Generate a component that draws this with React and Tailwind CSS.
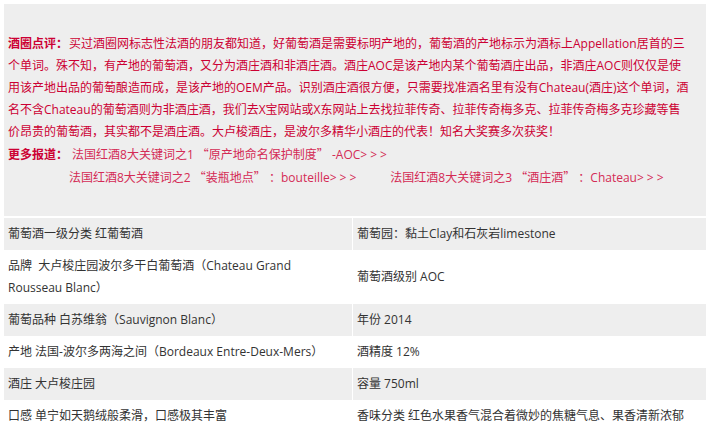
const font = { fontFamily: '"Open Sans", "Noto Sans CJK SC", sans-serif' };

const rows = [
  ["葡萄酒一级分类 红葡萄酒", "葡萄园：黏土Clay和石灰岩limestone", "gray"],
  ["品牌\u00a0\u00a0大卢梭庄园波尔多干白葡萄酒（Chateau Grand Rousseau Blanc）", "葡萄酒级别 AOC", "white"],
  ["葡萄品种 白苏维翁（Sauvignon Blanc）", "年份 2014", "gray"],
  ["产地 法国-波尔多两海之间（Bordeaux Entre-Deux-Mers）", "酒精度 12%", "white"],
  ["酒庄 大卢梭庄园", "容量 750ml", "gray"],
  ["口感 单宁如天鹅绒般柔滑，口感极其丰富", "香味分类 红色水果香气混合着微妙的焦糖气息、果香清新浓郁", "white"],
];

function Q({ children }) {
  return <span className="font-['Noto_Sans_CJK_SC']">{children}</span>;
}

function Arrows() {
  return <span className="tracking-[3px]">&gt;&gt;&gt;</span>;
}

export default function App() {
  return (
    <div className="min-h-screen bg-white pl-1 pt-1 text-[12px] leading-[22px]" style={font}>
      <div className="bg-[#eeeeee] pl-1 pr-[17px] pt-[29px] pb-[27px] text-[#cc0033]">
        <p>
          <b className="mr-[1px]">酒圈点评：</b>
          买过酒圈网标志性法酒的朋友都知道，好葡萄酒是需要标明产地的，葡萄酒的产地标示为酒标上Appellation居首的三个单词。殊不知，有产地的葡萄酒，又分为酒庄酒和非酒庄酒。酒庄AOC是该产地内某个葡萄酒庄出品，非酒庄AOC则仅仅是使用该产地出品的葡萄酿造而成，是该产地的OEM产品。识别酒庄酒很方便，只需要找准酒名里有没有Chateau(酒庄)这个单词，酒名不含Chateau的葡萄酒则为非酒庄酒，我们去X宝网站或X东网站上去找拉菲传奇、拉菲传奇梅多克、拉菲传奇梅多克珍藏等售价昂贵的葡萄酒，其实都不是酒庄酒。大卢梭酒庄，是波尔多精华小酒庄的代表！知名大奖赛多次获奖！
        </p>
        <p>
          <b>更多报道：</b>
          <span className="ml-1 text-[#d42b55]">
            法国红酒8大关键词之1 <Q>“原产地命名保护制度”</Q> -AOC<Arrows />
          </span>
        </p>
        <p className="pl-[61px] text-[#d42b55]">
          <span>
            法国红酒8大关键词之2 <Q>“装瓶地点”</Q> ：bouteille<Arrows />
          </span>
          <span className="ml-[31px]">
            法国红酒8大关键词之3 <Q>“酒庄酒”</Q> ：Chateau<Arrows />
          </span>
        </p>
      </div>
      <div className="mt-[2px] grid grid-cols-[348px_1fr] gap-x-[1px] text-[#333333]">
        {rows.map(([l, r, c], i) => (
          <div key={i} className="contents">
            <div className={`flex items-center pl-1 pr-[14px] py-[5px] ${c === "gray" ? "bg-[#eeeeee]" : "bg-white"}`}>
              <span>{l}</span>
            </div>
            <div className={`flex items-center pl-1 pr-2 py-[5px] ${c === "gray" ? "bg-[#eeeeee]" : "bg-white"}`}>
              <span>{r}</span>
            </div>
          </div>
        ))}
      </div>
    </div>
  );
}
